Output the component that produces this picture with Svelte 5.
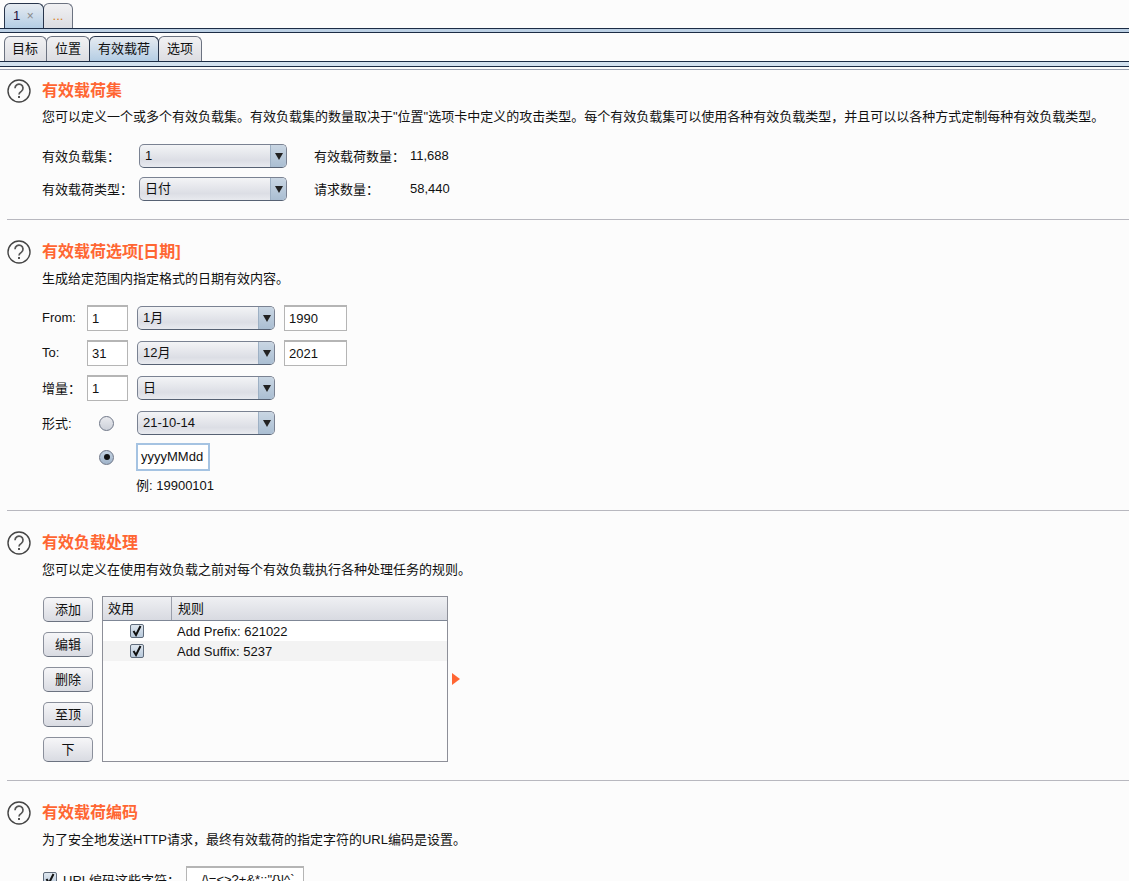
<script>
  const fromDate = { day: '1', month: '1月', year: '1990' };
  const toDate = { day: '31', month: '12月', year: '2021' };
  const actions = ['添加', '编辑', '删除', '至顶', '下'];
  const rules = ['Add Prefix: 621022', 'Add Suffix: 5237'];
</script>

{#snippet help()}
  <svg class="help" viewBox="0 0 24 24" width="24" height="24">
    <circle cx="12" cy="12" r="11" fill="none" stroke="#444" stroke-width="1.4" />
    <path d="M8 9.2a4 4 0 1 1 6.3 3.2c-1.5 1-2.3 1.6-2.3 3.2" fill="none" stroke="#555" stroke-width="1.7" />
    <rect x="11" y="17" width="2" height="2" fill="#555" />
  </svg>
{/snippet}

{#snippet select(value, cls)}
  <div class="select {cls}">
    <span class="select-value">{value}</span>
    <span class="select-arrow"><i></i></span>
  </div>
{/snippet}

{#snippet check()}
  <span class="check">
    <svg viewBox="0 0 14 14" width="14" height="14">
      <path d="M3.5 7l2.5 4L10.5 2" fill="none" stroke="#111" stroke-width="2" />
    </svg>
  </span>
{/snippet}

<div class="page">
  <div class="tabs top-tabs">
    <div class="tab active first">1 <span class="close">×</span></div>
    <div class="tab dots">...</div>
  </div>
  <div class="rule-top"></div>
  <div class="tabs sub-tabs">
    <div class="tab">目标</div>
    <div class="tab">位置</div>
    <div class="tab active">有效载荷</div>
    <div class="tab">选项</div>
  </div>
  <div class="rule-sub"></div>

  <section class="s1">
    <div class="head">{@render help()}<h2>有效载荷集</h2></div>
    <p class="desc">您可以定义一个或多个有效负载集。有效负载集的数量取决于"位置"选项卡中定义的攻击类型。每个有效负载集可以使用各种有效负载类型，并且可以以各种方式定制每种有效负载类型。</p>
    <div class="set-grid">
      <span>有效负载集：</span>
      {@render select('1', 'w148')}
      <span class="count-label">有效载荷数量：</span>
      <span>11,688</span>
      <span>有效载荷类型：</span>
      {@render select('日付', 'w148')}
      <span class="count-label">请求数量：</span>
      <span>58,440</span>
    </div>
  </section>

  <section class="s2">
    <div class="head">{@render help()}<h2>有效载荷选项[日期]</h2></div>
    <p class="desc">生成给定范围内指定格式的日期有效内容。</p>
    <div class="date-rows">
      <div class="date-row">
        <span class="lbl">From:</span>
        <div class="input w41">{fromDate.day}</div>
        {@render select(fromDate.month, 'w138')}
        <div class="input w63">{fromDate.year}</div>
      </div>
      <div class="date-row">
        <span class="lbl">To:</span>
        <div class="input w41">{toDate.day}</div>
        {@render select(toDate.month, 'w138')}
        <div class="input w63">{toDate.year}</div>
      </div>
      <div class="date-row">
        <span class="lbl">增量：</span>
        <div class="input w41">1</div>
        {@render select('日', 'w138')}
      </div>
      <div class="date-row">
        <span class="lbl">形式:</span>
        <span class="radio-cell"><span class="radio"></span></span>
        {@render select('21-10-14', 'w138')}
      </div>
      <div class="date-row custom">
        <span class="lbl"></span>
        <span class="radio-cell"><span class="radio on"></span></span>
        <div class="input focus">yyyyMMdd</div>
      </div>
      <div class="example">例: 19900101</div>
    </div>
  </section>

  <section class="s3">
    <div class="head">{@render help()}<h2>有效负载处理</h2></div>
    <p class="desc">您可以定义在使用有效负载之前对每个有效负载执行各种处理任务的规则。</p>
    <div class="proc">
      <div class="actions">
        {#each actions as a}
          <button>{a}</button>
        {/each}
      </div>
      <div class="table">
        <div class="thead">
          <div class="c1">效用</div>
          <div class="c2">规则</div>
        </div>
        {#each rules as r, i}
          <div class="trow" class:alt={i === 1}>
            <div class="c1">{@render check()}</div>
            <div class="c2">{r}</div>
          </div>
        {/each}
      </div>
      <span class="arrow"></span>
    </div>
  </section>

  <section class="s4">
    <div class="head">{@render help()}<h2>有效载荷编码</h2></div>
    <p class="desc">为了安全地发送HTTP请求，最终有效载荷的指定字符的URL编码是设置。</p>
    <div class="enc">
      {@render check()}
      <span class="enc-label">URL编码这些字符：</span>
      <div class="input enc-input">./\=&lt;&gt;?+&amp;*;:"{'{}'}|^`</div>
    </div>
  </section>
</div>

<style>
  :global(body) {
    margin: 0;
    background: #fcfcfc;
  }

  .page {
    height: 881px;
    overflow: hidden;
    font-family: "Liberation Sans", "Noto Sans CJK SC", sans-serif;
    font-size: 13px;
    color: #111;
    background: #fcfcfc;
  }

  .tabs {
    display: flex;
    align-items: flex-end;
    box-sizing: border-box;
    padding-left: 4px;
    height: 29px;
    padding-top: 3px;
    border-bottom: 1px solid #1c2c45;
  }

  .rule-top {
    height: 3px;
    background: #bcd0e4;
    border-bottom: 1px solid #1c2c45;
  }

  .rule-sub {
    height: 4px;
    background: #d3e1ee;
    border-bottom: 1px solid #1c2c45;
    box-shadow: 0 2px 0 #fcfcfc, 0 3px 0 #9a9fae;
    margin-bottom: 12px;
  }

  .tab {
    height: 25px;
    box-sizing: border-box;
    padding: 0 8px;
    line-height: 24px;
    border: 1px solid #6b7280;
    border-bottom: 0;
    border-radius: 6px 6px 0 0;
    background: linear-gradient(#f1f1f3, #dcdde2);
    margin-right: -1px;
  }

  .sub-tabs .tab:first-child {
    padding-left: 7px;
  }

  .tab.active {
    background: linear-gradient(#e6ebf1, #b4cde4);
    border-color: #28354b;
    position: relative;
  }

  .tab.first {
    width: 40px;
    padding-left: 8px;
    color: #1f1140;
  }

  .close {
    color: #888;
    font-size: 12px;
    margin-left: 3px;
  }

  .dots {
    width: 30px;
    color: #d9801f;
    text-align: center;
    padding: 0;
  }

  section {
    box-sizing: border-box;
    margin-left: 7px;
    border-bottom: 1px solid #b8b8bf;
  }

  .s1 { height: 141px; }
  .s2 { height: 291px; padding-top: 20px; }
  .s3 { height: 270px; padding-top: 20px; }
  .s4 { padding-top: 20px; border-bottom: 0; }

  .head {
    display: flex;
    align-items: center;
    gap: 11px;
    height: 24px;
  }

  h2 {
    margin: 0 0 5px;
    font-size: 16px;
    font-weight: bold;
    color: #ff6633;
  }

  .desc {
    margin: 8px 0 0 35px;
    line-height: 14px;
    white-space: nowrap;
  }

  .s1 .desc { margin-top: 7px; }

  .set-grid {
    display: grid;
    grid-template-columns: 97px 148px 123px auto;
    row-gap: 9px;
    align-items: center;
    justify-content: start;
    margin: 20px 0 0 35px;
  }

  .set-grid > span {
    padding-bottom: 2px;
  }

  .count-label {
    margin-left: 27px;
    white-space: nowrap;
  }

  .select {
    display: flex;
    height: 24px;
    box-sizing: border-box;
    border: 1px solid #7a8292;
    border-bottom-color: #566173;
    border-radius: 5px;
    background: linear-gradient(#f3f4f6, #dcdee5 70%, #e8eaef);
    overflow: hidden;
  }

  .w148 { width: 148px; }
  .w138 { width: 138px; }

  .select-value {
    flex: 1;
    line-height: 22px;
    padding-left: 5px;
  }

  .select-arrow {
    width: 15px;
    display: flex;
    align-items: center;
    justify-content: center;
    background: linear-gradient(#c9d6e3, #aabed2);
    border-left: 1px solid #9db0c4;
  }

  .select-arrow i {
    border-left: 4px solid transparent;
    border-right: 4px solid transparent;
    border-top: 7px solid #222;
  }

  .date-rows {
    margin: 19px 0 0 35px;
  }

  .date-row {
    display: flex;
    align-items: center;
    gap: 9px;
    height: 26px;
    margin-bottom: 9px;
  }

  .lbl {
    width: 36px;
    white-space: nowrap;
    padding-bottom: 2px;
  }

  .input {
    box-sizing: border-box;
    height: 26px;
    line-height: 23px;
    padding-left: 4px;
    background: #fff;
    border: 1px solid #b5b5b5;
    border-top: 2px solid #b5b5b5;
  }

  .w41 { width: 41px; }
  .w63 { width: 63px; }

  .radio-cell {
    width: 41px;
    display: flex;
    justify-content: center;
    margin-left: -1px;
    margin-right: 1px;
  }

  .radio {
    width: 15px;
    height: 15px;
    box-sizing: border-box;
    border-radius: 50%;
    border: 1px solid #6e7687;
    background: linear-gradient(#e9eaee, #ccd0d9);
    display: flex;
    align-items: center;
    justify-content: center;
  }

  .radio.on {
    background: linear-gradient(#c5d3e2, #9fb3c9);
  }

  .radio.on::after {
    content: "";
    width: 6px;
    height: 6px;
    border-radius: 50%;
    background: #111;
  }

  .custom {
    height: 28px;
    margin-top: -2px;
    margin-bottom: 8px;
  }

  .focus {
    width: 74px;
    height: 28px;
    border: 2px solid #a5c3e2;
    line-height: 24px;
    padding-left: 3px;
    margin-left: -1px;
  }

  .example {
    margin-left: 94px;
    line-height: 14px;
  }

  .proc {
    display: flex;
    align-items: flex-start;
    margin: 19px 0 0 36px;
    position: relative;
  }

  .actions {
    display: flex;
    flex-direction: column;
    gap: 10px;
    width: 50px;
    margin-top: 1px;
    margin-right: 9px;
  }

  button {
    height: 25px;
    width: 50px;
    padding: 0 0 2px;
    font: inherit;
    color: #111;
    border: 1px solid #8a8f9b;
    border-bottom-color: #6b7280;
    border-radius: 5px;
    background: linear-gradient(#f6f6f8, #d9dbe2);
  }

  .table {
    width: 346px;
    height: 166px;
    box-sizing: border-box;
    border: 1px solid #8d8f98;
    background: #fcfcfc;
  }

  .thead {
    display: flex;
    height: 23px;
    line-height: 23px;
    background: linear-gradient(#eff0f3, #d8dae1);
    border-bottom: 1px solid #7f8796;
  }

  .thead .c2 { border-left: 1px solid #9a9eaa; }

  .trow {
    display: flex;
    height: 20px;
    line-height: 21px;
    background: #fff;
  }

  .trow.alt { background: #f3f3f3; }

  .c1 {
    width: 68px;
    box-sizing: border-box;
    padding-left: 5px;
  }

  .trow .c1 {
    padding-left: 27px;
    display: flex;
    align-items: center;
  }

  .c2 { flex: 1; padding-left: 6px; }

  .check {
    display: inline-flex;
    width: 14px;
    height: 14px;
    box-sizing: border-box;
    border: 1px solid #5f6b7b;
    border-radius: 2px;
    background: linear-gradient(#dfe7ef, #b7c8da);
    align-items: center;
    justify-content: center;
  }

  .check svg { flex: none; }

  .arrow {
    position: absolute;
    left: 409px;
    top: 77px;
    border-left: 8px solid #ff6633;
    border-top: 6px solid transparent;
    border-bottom: 6px solid transparent;
  }

  .enc {
    display: flex;
    align-items: center;
    margin: 19px 0 0 36px;
    gap: 6px;
    height: 26px;
  }

  .enc-label { width: 117px; white-space: nowrap; }

  .enc-input {
    width: 118px;
    padding-left: 11px;
    white-space: nowrap;
  }
</style>
